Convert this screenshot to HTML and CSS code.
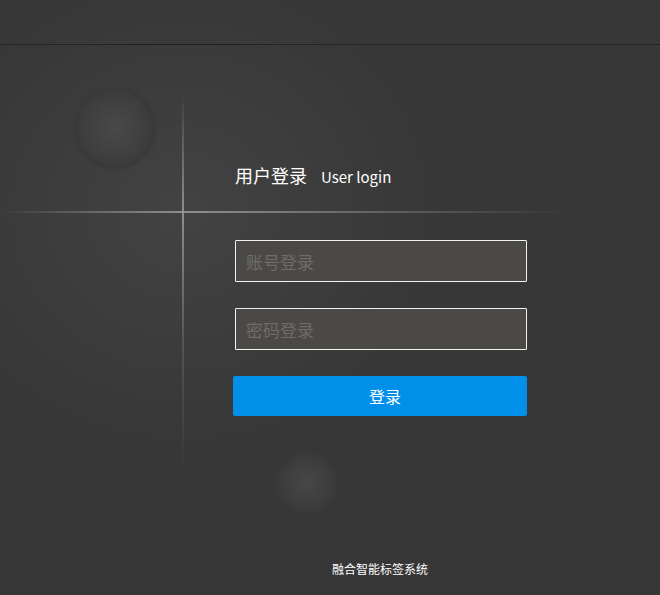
FILE: index.html
```html
<!DOCTYPE html>
<html lang="zh-CN">
<head>
  <meta charset="UTF-8" />
  <title>融合智能标签系统 - 用户登录</title>
  <meta name="viewport" content="width=device-width, initial-scale=1.0"/>
  <link rel="stylesheet" href="styles.css">
</head>
<body>

<div class="top-bar"></div>

<div class="login-wrap">
  <h2 class="login-title">用户登录<span>User login</span></h2>
  <form class="login-form" onsubmit="return false">
    <input type="text" id="account" placeholder="账号登录">
    <input type="password" id="password" placeholder="密码登录">
    <button type="submit">登录</button>
  </form>
  <p class="footer">融合智能标签系统</p>
</div>

</body>
</html>
```

FILE: styles.css
```css
* {
  margin: 0;
  padding: 0;
  box-sizing: border-box;
}

body {
  height: 595px;
  overflow: hidden;
  font-family: "Noto Sans CJK SC", "Noto Sans", sans-serif;
  background-color: #373737;
  /* balls, light cross and glow behind the form */
  background-image:
    radial-gradient(circle at 115px 128px, #494949 0, #434343 18px, #3d3d3d 35px, #393939 39px, rgba(55,55,55,0) 44px),
    radial-gradient(circle at 307px 483px, #464646 0, #414141 14px, #3c3c3c 26px, #393939 29px, rgba(55,55,55,0) 33px),
    linear-gradient(to right, rgba(140,140,140,0), rgba(150,150,150,0.9) 183px, rgba(120,120,120,0.5) 420px, rgba(90,90,90,0) 570px),
    linear-gradient(to bottom, rgba(140,140,140,0), rgba(150,150,150,0.9) 117px, rgba(120,120,120,0.4) 250px, rgba(90,90,90,0) 380px),
    radial-gradient(ellipse 260px 240px at 183px 212px, rgba(255,255,255,0.06), rgba(255,255,255,0));
  background-repeat: no-repeat;
  background-size: auto, auto, 600px 2px, 2px 380px, auto;
  background-position: 0 0, 0 0, 0 211px, 182px 95px, 0 0;
}

.top-bar {
  height: 45px;
  border-bottom: 1px solid #242224;
}

.login-wrap {
  width: 294px;
  margin-left: 233px;
  padding-top: 117px;
}

.login-title {
  font-size: 18px;
  font-weight: normal;
  color: #fff;
  line-height: 26px;
  padding-left: 2px;
  margin-bottom: 50px;
}

.login-title span {
  font-size: 15px;
  margin-left: 14px;
}

.login-form {
  display: flex;
  flex-direction: column;
  align-items: flex-end;
  gap: 26px;
}

.login-form input {
  width: 292px;
  height: 42px;
  padding: 0 10px;
  border: 1px solid #f2f2f2;
  border-radius: 1px;
  background: #4b4946;
  color: #ddd;
  font-size: 17px;
  font-family: inherit;
  outline: none;
}

.login-form input::placeholder {
  color: #6e6c6a;
}

.login-form button {
  width: 294px;
  height: 40px;
  padding-left: 10px;
  border: none;
  border-radius: 2px;
  background: #008fe9;
  color: #fff;
  font-size: 16px;
  font-family: inherit;
  cursor: pointer;
}

.footer {
  margin-top: 145px;
  text-align: center;
  font-size: 12px;
  line-height: 16px;
  color: #fff;
}
```
